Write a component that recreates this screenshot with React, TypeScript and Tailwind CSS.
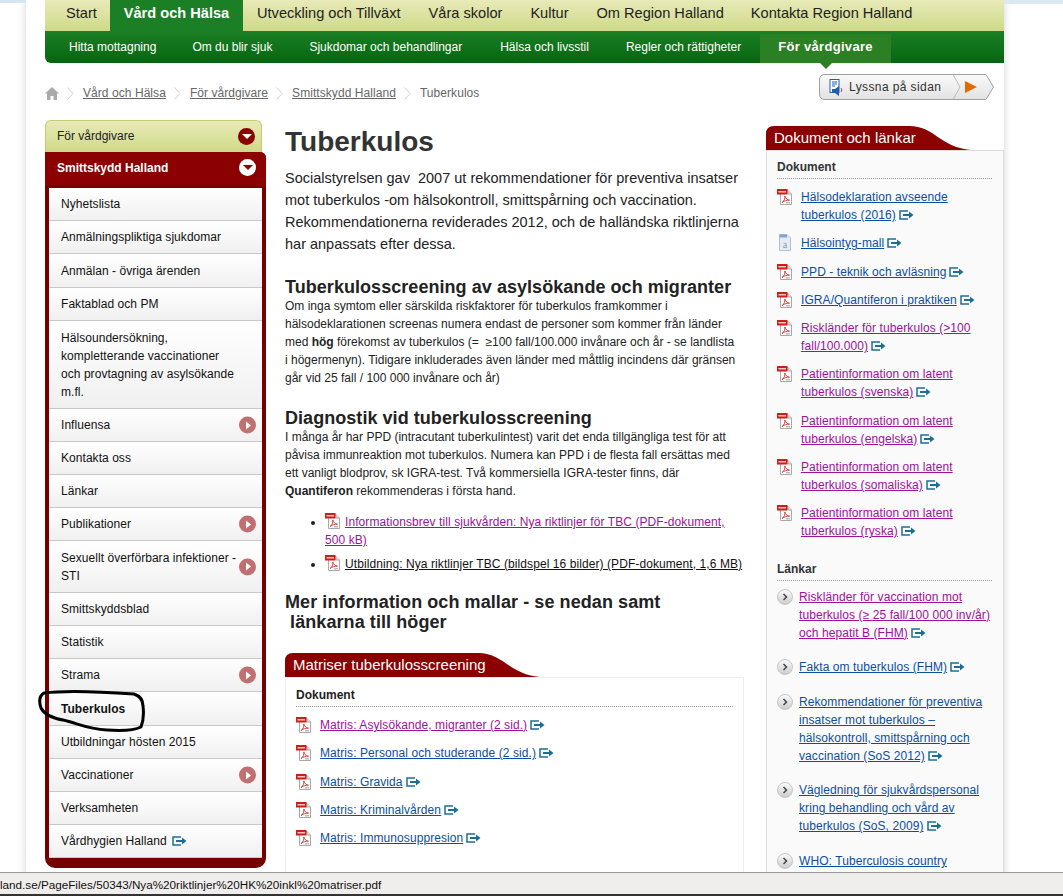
import * as React from "react";

const PdfIcon = ({ className = "" }: { className?: string }) => (
  <svg viewBox="0 0 16 16" className={`h-4 w-4 shrink-0 ${className}`}>
    <path d="M3.5 1.500H11l3.500 3.500v10.500h-11z" fill="#fff" stroke="#a8a8a8" />
    <path d="M11 1.500V5h3.500" fill="#e4e4e4" stroke="#a8a8a8" />
    <rect x="0" y="0" width="10.500" height="5.500" fill="#cc1f1a" />
    <rect x="1.500" y="2" width="7.500" height="1.500" fill="#f3c4c2" />
    <path d="M5 13.500c2.200-1.300 3.200-4 2.800-6.500.7 2.400 2.200 3.800 4.700 4.200-2.800 0-5.500.7-7.500 2.300z" fill="none" stroke="#d8443c" />
    <rect x="9" y="13" width="4" height="1.500" fill="#bbb" />
  </svg>
);

const DocIcon = () => (
  <svg viewBox="0 0 16 17" className="h-[17px] w-4 shrink-0">
    <path d="M2.500 .5H10l3.500 3.500v12.500h-11z" fill="#e6ebf3" stroke="#b4bfd0" />
    <path d="M2.500 .5H10v3H2.500z" fill="#7ea6d8" />
    <text x="8" y="14" textAnchor="middle" fontSize="10" fontFamily="Liberation Serif, serif" fill="#7f9cc8">a</text>
  </svg>
);

const ExtIcon = () => (
  <svg viewBox="0 0 15 10" className="ml-[3px] inline-block h-[10px] w-[15px] align-[-1px]">
    <path d="M9 1H1v8h8" fill="none" stroke="#1c6f94" strokeWidth="1.500" />
    <path d="M4 4h6V1.500L14.500 5 10 8.500V6H4z" fill="#1c6f94" />
  </svg>
);

const RoundArrow = ({ light }: { light?: boolean }) => (
  <span className={`flex h-[17px] w-[17px] items-center justify-center rounded-full ${light ? "bg-white" : "bg-[#8b0000]"}`}>
    <span className={`h-0 w-0 border-x-[5px] border-t-[5px] border-x-transparent ${light ? "border-t-[#8b0000]" : "border-t-white"}`} />
  </span>
);

const SideArrow = () => (
  <span className="absolute right-[6px] top-1/2 flex h-[17px] w-[17px] -translate-y-1/2 items-center justify-center rounded-full bg-[#c07070]">
    <span className="ml-[1px] h-0 w-0 border-y-[4px] border-l-[5px] border-y-transparent border-l-white" />
  </span>
);

const Crumb = () => (
  <svg viewBox="0 0 7 13" className="ml-2 mr-[9px] h-[13px] w-[7px] shrink-0">
    <path d="M.5 .5L6 6.500.5 12.500" fill="none" stroke="#cfcfcf" />
  </svg>
);

const sideItems: { label: React.ReactNode; h: number; arrow?: boolean; bold?: boolean }[] = [
  { label: "Nyhetslista", h: 33 },
  { label: "Anmälningspliktiga sjukdomar", h: 33 },
  { label: "Anmälan - övriga ärenden", h: 34 },
  { label: "Faktablad och PM", h: 33 },
  { label: <>Hälsoundersökning,<br />kompletterande vaccinationer<br />och provtagning av asylsökande<br />m.fl.</>, h: 88 },
  { label: "Influensa", h: 33, arrow: true },
  { label: "Kontakta oss", h: 33 },
  { label: "Länkar", h: 33 },
  { label: "Publikationer", h: 33, arrow: true },
  { label: <>Sexuellt överförbara infektioner -<br />STI</>, h: 52, arrow: true },
  { label: "Smittskyddsblad", h: 33 },
  { label: "Statistik", h: 33 },
  { label: "Strama", h: 33, arrow: true },
  { label: "Tuberkulos", h: 34, bold: true },
  { label: "Utbildningar hösten 2015", h: 33 },
  { label: "Vaccinationer", h: 33, arrow: true },
  { label: "Verksamheten", h: 33 },
  { label: <>Vårdhygien Halland<span className="ml-[2px]"><ExtIcon /></span></>, h: 33 },
];

const TabHeader = ({ title, width }: { title: string; width: number }) => (
  <div className="relative h-[24px] text-[15px] leading-[24px] text-white">
    <svg viewBox={`0 0 ${width} 24`} width={width} height="24" className="absolute left-0 top-0">
      <path d={`M0 24V8Q0 0 8 0H${width - 62}C${width - 36} 0 ${width - 32} 21 ${width} 24Z`} fill="#8b0000" />
    </svg>
    <span className="relative ml-2">{title}</span>
  </div>
);

const visited = "text-[#a0109a]";
const blue = "text-[#0b4ea2]";

const DocRow = ({ lines, purple, icon = "pdf" }: { lines: string[]; purple?: boolean; icon?: string }) => (
  <div className="mb-[10.3px] flex gap-2">
    {icon === "pdf" ? <PdfIcon className="mt-[1px]" /> : <DocIcon />}
    <div className="leading-[18px] tracking-[0.08px]">
      {lines.map((l, i) => (
        <React.Fragment key={i}>
          {i > 0 && <br />}
          <a className={`underline ${purple ? visited : blue}`}>{l}</a>
        </React.Fragment>
      ))}
      <ExtIcon />
    </div>
  </div>
);

const LinkRow = ({ lines, purple, ext = true }: { lines: string[]; purple?: boolean; ext?: boolean }) => (
  <div className="mb-[16.6px] flex gap-[6px]">
    <span className="mt-[1px] flex h-4 w-4 shrink-0 items-center justify-center rounded-full border border-[#c4c4c4] bg-gradient-to-b from-[#fbfbfb] to-[#cdcdcd]">
      <svg viewBox="0 0 6 8" className="h-2 w-[6px]"><path d="M1.500 1l3 3-3 3" fill="none" stroke="#444" strokeWidth="1.500" /></svg>
    </span>
    <div className="leading-[18px] tracking-[0.08px]">
      {lines.map((l, i) => (
        <React.Fragment key={i}>
          {i > 0 && <br />}
          <a className={`underline ${purple ? visited : blue}`}>{l}</a>
        </React.Fragment>
      ))}
      {ext && <ExtIcon />}
    </div>
  </div>
);

export default function App() {
  return (
    <div className="relative h-[896px] w-full overflow-hidden bg-white font-['Liberation_Sans',Arial,sans-serif] text-xs text-[#222]">
      <div className="absolute left-0 top-0 h-[3px] w-[26px] bg-[#d4e6f4]" />
      <div className="absolute right-0 top-0 h-[4px] w-[59px] bg-[#dbe9f4]" />
      <div className="ml-[26px] w-[978px] bg-white pl-[19px] shadow-[0_0_8px_rgba(0,0,0,0.18)]">
        {/* main nav */}
        <nav className="flex h-[31px] items-center bg-gradient-to-b from-[#e8eab8] to-[#cfd987] pb-[4px] text-[14.6px] text-[#222]">
          <a className="w-[65px] pl-[21px]">Start</a>
          <a className="-mb-[4px] flex h-[31px] w-[133px] items-center justify-center bg-[#1a7f25] pb-[4px] font-bold text-white">Vård och Hälsa</a>
          <a className="px-[14px]">Utveckling och Tillväxt</a>
          <a className="px-[14px]">Våra skolor</a>
          <a className="px-[14px]">Kultur</a>
          <a className="pl-[14px] pr-[13px]">Om Region Halland</a>
          <a className="px-[14px]">Kontakta Region Halland</a>
        </nav>
        <nav className="relative flex h-[32px] items-center rounded-bl-[6px] bg-gradient-to-b from-[#1a7f25] to-[#05660f] pl-6 text-xs text-white">
          <a className="mr-[36px]">Hitta mottagning</a>
          <a className="mr-[37px]">Om du blir sjuk</a>
          <a className="mr-[38px]">Sjukdomar och behandlingar</a>
          <a className="mr-[37px]">Hälsa och livsstil</a>
          <a className="mr-[19px]">Regler och rättigheter</a>
          <a className="relative flex h-[29px] w-[131px] items-center self-end bg-[#2b8023] pb-[3px] pl-[18px] text-[13px] font-bold tracking-[0.3px]">
            För vårdgivare
            <span className="absolute left-1/2 top-full h-0 w-0 -translate-x-1/2 border-x-[6px] border-t-[6px] border-x-transparent border-t-[#2b8023]" />
          </a>
        </nav>

        {/* breadcrumb row */}
        <div className="flex h-[57px] items-start">
          <div className="mt-[22px] flex items-center tracking-[0.06px] text-[#666]">
            <svg viewBox="0 0 14 13" className="h-[13px] w-[14px]"><path d="M7 0L0 6.500h2V13h3.500V9h3v4H12V6.500h2z" fill="#aaa" /></svg>
            <Crumb />
            <a className="underline">Vård och Hälsa</a>
            <Crumb />
            <a className="underline">För vårdgivare</a>
            <Crumb />
            <a className="underline">Smittskydd Halland</a>
            <Crumb />
            <span>Tuberkulos</span>
          </div>
          <div className="relative ml-auto mr-[10px] mt-[11px] flex h-[26px] w-[175px] items-center pl-[10px] text-xs tracking-[0.4px] text-[#333]">
            <svg viewBox="0 0 175 26" className="absolute inset-0 h-[26px] w-[175px]">
              <defs>
                <linearGradient id="lyssna" x1="0" y1="0" x2="0" y2="1">
                  <stop offset="0" stopColor="#fafafa" />
                  <stop offset="1" stopColor="#e2e2e2" />
                </linearGradient>
              </defs>
              <path d="M6 .5H167L174.500 13 167 25.500H6Q.5 25.500 .5 20V6Q.5 .5 6 .5z" fill="url(#lyssna)" stroke="#a0a0a0" />
              <path d="M134 .5L141 13 134 25.500" fill="none" stroke="#bbb" />
            </svg>
            <svg viewBox="0 0 16 17" className="relative mr-[4px] h-[17px] w-4">
              <rect x="1" y="0.500" width="9" height="13" fill="#fff" stroke="#1f5fb0" />
              <path d="M3 3h5M3 5h5M3 7h3" stroke="#1f5fb0" />
              <path d="M3 10h3l4-3v10l-4-3H3z" fill="#1f5fb0" />
              <path d="M12 9c1 1 1 3 0 4" stroke="#d33" fill="none" />
            </svg>
            <span className="relative">Lyssna på sidan</span>
            <span className="absolute left-[146px] top-[7px] h-0 w-0 border-y-[6px] border-l-[12px] border-y-transparent border-l-[#e46a00]" />
          </div>
        </div>

        <div className="flex items-start">
          {/* left menu */}
          <aside className="w-[221px] shrink-0">
            <div className="flex h-[32px] w-[217px] items-center justify-between rounded-t-[6px] border border-b-0 border-[#c3cc6f] bg-gradient-to-b from-[#e8eab8] to-[#cfd987] pb-[1px] pl-[11px] pr-[6px] text-[#222]">
              För vårdgivare <RoundArrow />
            </div>
            <div className="rounded-b-[10px] rounded-tr-[6px] bg-[#760000] px-[4px] pb-[10px]">
              <div className="-mx-[4px] flex h-[33px] items-center justify-between rounded-tr-[6px] bg-[#8b0000] pb-[2px] pl-[12px] pr-[10px] font-bold text-white">
                Smittskydd Halland <RoundArrow light />
              </div>
              <div className="-mx-[4px] h-[3px] bg-[#760000]" />
              <ul className="bg-white">
                {sideItems.map((it, i) => (
                  <li
                    key={i}
                    style={{ height: it.h }}
                    className={`relative flex items-center border-b border-[#c9c9c9] bg-gradient-to-b from-white to-[#f0f0f0] pl-3 leading-[18px] tracking-[0.05px] text-[#111] ${it.bold ? "font-bold" : ""}`}
                  >
                    <span>{it.label}</span>
                    {it.arrow && <SideArrow />}
                  </li>
                ))}
              </ul>
            </div>
          </aside>

          {/* center */}
          <main className="ml-[19px] w-[459px] shrink-0">
            <h1 className="mt-[4px] text-[28px] font-bold leading-[36px] text-[#333]">Tuberkulos</h1>
            <p className="mt-[7px] text-[14.5px] leading-[22px]">
              Socialstyrelsen gav&nbsp; 2007 ut rekommendationer för preventiva insatser<br />
              mot tuberkulos -om hälsokontroll, smittspårning och vaccination.<br />
              Rekommendationerna reviderades 2012, och de halländska riktlinjerna<br />
              har anpassats efter dessa.
            </p>
            <h2 className="mt-[22px] text-[18px] font-bold leading-[20px] tracking-[0.05px] text-[#222]">Tuberkulosscreening av asylsökande och migranter</h2>
            <p className="leading-[18px]">
              Om inga symtom eller särskilda riskfaktorer för tuberkulos framkommer i<br />
              hälsodeklarationen screenas numera endast de personer som kommer från länder<br />
              med <b>hög</b> förekomst av tuberkulos (= &nbsp;≥100 fall/100.000 invånare och år - se landlista<br />
              i högermenyn). Tidigare inkluderades även länder med måttlig incindens där gränsen<br />
              går vid 25 fall / 100 000 invånare och år)
            </p>
            <h2 className="mt-[21px] text-[18px] font-bold leading-[20px] tracking-[0.05px] text-[#222]">Diagnostik vid tuberkulosscreening</h2>
            <p className="leading-[18px]">
              I många år har PPD (intracutant tuberkulintest) varit det enda tillgängliga test för att<br />
              påvisa immunreaktion mot tuberkulos. Numera kan PPD i de flesta fall ersättas med<br />
              ett vanligt blodprov, sk IGRA-test. Två kommersiella IGRA-tester finns, där<br />
              <b>Quantiferon</b> rekommenderas i första hand.
            </p>
            <ul className="mt-[13px] list-disc pl-[40px] leading-[18px] tracking-[0.08px]">
              <li className="mb-[6px]">
                <PdfIcon className="mr-[4px] inline-block align-[-3px]" />
                <a className={`underline ${visited}`}>Informationsbrev till sjukvården: Nya riktlinjer för TBC (PDF-dokument,<br />500 kB)</a>
              </li>
              <li>
                <PdfIcon className="mr-[4px] inline-block align-[-3px]" />
                <a className="text-[#111] underline">Utbildning: Nya riktlinjer TBC (bildspel 16 bilder) (PDF-dokument, 1,6 MB)</a>
              </li>
            </ul>
            <h2 className="mt-[19px] text-[18px] font-bold leading-[20px] tracking-[0.08px] text-[#222]">
              Mer information och mallar - se nedan samt<br />&nbsp;länkarna till höger
            </h2>
            <div className="mt-[21px]">
              <TabHeader title="Matriser tuberkulosscreening" width={255} />
              <div className="h-[260px] border border-[#eee] px-[10px] pt-[8px]">
                <div className="border-b border-dotted border-[#999] pb-[2px] font-bold leading-[18px]">Dokument</div>
                <div className="mt-[9px]">
                  <DocRow lines={["Matris: Asylsökande, migranter (2 sid.)"]} purple />
                  <DocRow lines={["Matris: Personal och studerande (2 sid.)"]} />
                  <DocRow lines={["Matris: Gravida"]} />
                  <DocRow lines={["Matris: Kriminalvården"]} />
                  <DocRow lines={["Matris: Immunosuppresion"]} />
                </div>
              </div>
            </div>
          </main>

          {/* right */}
          <aside className="ml-[22px] mt-[6px] w-[238px] shrink-0">
            <div className="relative border-b border-[#ddd]">
              <TabHeader title="Dokument och länkar" width={205} />
            </div>
            <div className="h-[760px] border-l border-r border-[#ddd] bg-[#fafafa] pl-[10px] pr-[11px] pt-[7px]">
              <div className="border-b border-dotted border-[#999] pb-[2px] font-bold leading-[18px] text-[#333]">Dokument</div>
              <div className="mt-[9px]">
                <DocRow lines={["Hälsodeklaration avseende", "tuberkulos (2016)"]} />
                <DocRow lines={["Hälsointyg-mall"]} icon="doc" />
                <DocRow lines={["PPD - teknik och avläsning"]} />
                <DocRow lines={["IGRA/Quantiferon i praktiken"]} />
                <DocRow lines={["Riskländer för tuberkulos (>100", "fall/100.000)"]} purple />
                <DocRow lines={["Patientinformation om latent", "tuberkulos (svenska)"]} purple />
                <DocRow lines={["Patientinformation om latent", "tuberkulos (engelska)"]} purple />
                <DocRow lines={["Patientinformation om latent", "tuberkulos (somaliska)"]} purple />
                <DocRow lines={["Patientinformation om latent", "tuberkulos (ryska)"]} purple />
              </div>
              <div className="mt-[8px] border-b border-dotted border-[#999] pb-[2px] pt-[9px] font-bold leading-[18px] text-[#333]">Länkar</div>
              <div className="mt-[7px]">
                <LinkRow lines={["Riskländer för vaccination mot", "tuberkulos (≥ 25 fall/100 000 inv/år)", "och hepatit B (FHM)"]} purple />
                <LinkRow lines={["Fakta om tuberkulos (FHM)"]} />
                <LinkRow lines={["Rekommendationer för preventiva", "insatser mot tuberkulos –", "hälsokontroll, smittspårning och", "vaccination (SoS 2012)"]} />
                <LinkRow lines={["Vägledning för sjukvårdspersonal", "kring behandling och vård av", "tuberkulos (SoS, 2009)"]} />
                <LinkRow lines={["WHO: Tuberculosis country"]} ext={false} />
              </div>
            </div>
          </aside>
        </div>
      </div>

      {/* hand-drawn circle around the menu item */}
      <svg className="absolute left-[36px] top-[688px]" width="114" height="48" viewBox="0 0 114 48" fill="none">
        <path d="M8 5C30 2 70 4 98 6c6 2 9 6 9 12 1 8 0 16-2 21-8 4-20 4-34 3-20-1-30-7-44-10C16 30 8 26 5 20 3 14 3 8 8 5z" stroke="#000" strokeWidth="3" />
      </svg>

      {/* browser status bar */}
      <div className="absolute inset-x-0 bottom-0 h-[24px] border-b-2 border-t border-b-[#333] border-t-[#999] bg-[#f0eded] text-[11.7px] leading-[23px] text-[#111]">
        land.se/PageFiles/50343/Nya%20riktlinjer%20HK%20inkl%20matriser.pdf
      </div>
    </div>
  );
}
